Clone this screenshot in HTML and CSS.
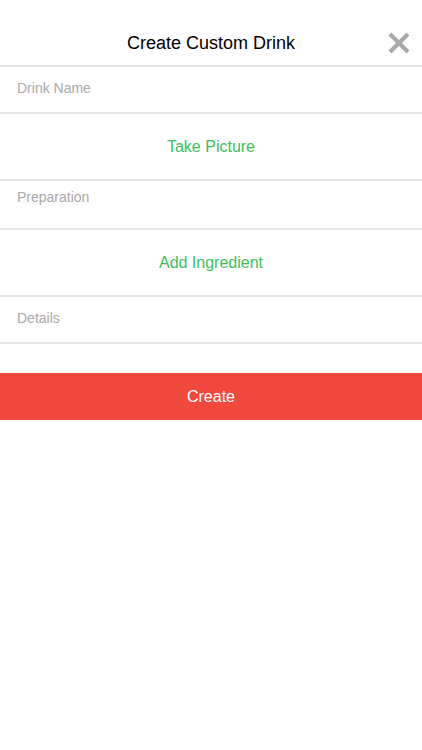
FILE: index.html
```html
<!DOCTYPE html>
<html>
<head>
  <title>Create Custom Drink</title>
  <link rel="stylesheet" href="styles.css">
</head>
<body>
  <div class="screen">
    <!-- Header -->
    <div class="header">
      <h1>Create Custom Drink</h1>
      <span class="close">
        <svg width="24" height="24" viewBox="0 0 24 24">
          <path d="M3 3 L21 21 M21 3 L3 21" stroke="#a9a9a9" stroke-width="4.2" stroke-linecap="butt"/>
        </svg>
      </span>
    </div>

    <!-- Formulier -->
    <div class="row field">Drink Name</div>
    <div class="row action">Take Picture</div>
    <div class="row field tall">Preparation</div>
    <div class="row action">Add Ingredient</div>
    <div class="row field">Details</div>

    <div class="button">Create</div>
  </div>
</body>
</html>
```

FILE: styles.css
```css
body {
  margin: 0;
  background: #ffffff;
  font-family: "Liberation Sans", Arial, sans-serif;
}

.screen {
  display: flex;
  flex-direction: column;
}

/* Titelbalk */
.header {
  height: 65px;
  display: flex;
  align-items: center;
  justify-content: center;
  border-bottom: 2px solid #e2e2e2;
  position: relative;
}

.header h1 {
  margin: 0;
  padding-top: 22px;
  font-size: 18px;
  font-weight: normal;
  color: #000;
}

.close {
  position: absolute;
  right: 11px;
  top: 31px;
  width: 24px;
  height: 24px;
}

.close svg {
  display: block;
}

/* Rijen */
.row {
  border-bottom: 2px solid #e4e4e4;
  display: flex;
  align-items: center;
}

.field {
  height: 41px;
  padding: 0 0 4px 17px;
  font-size: 14px;
  color: #aaaaaa;
}

.field.tall {
  height: 39px;
  align-items: flex-start;
  padding: 8px 0 0 17px;
}

.action {
  height: 65px;
  justify-content: center;
  font-size: 16px;
  color: #3cc15c;
}

/* Knop */
.button {
  margin-top: 29px;
  height: 47px;
  background: #ef493d;
  color: #ffffff;
  font-size: 16px;
  display: flex;
  align-items: center;
  justify-content: center;
  padding-top: 1px;
  box-sizing: border-box;
}
```
